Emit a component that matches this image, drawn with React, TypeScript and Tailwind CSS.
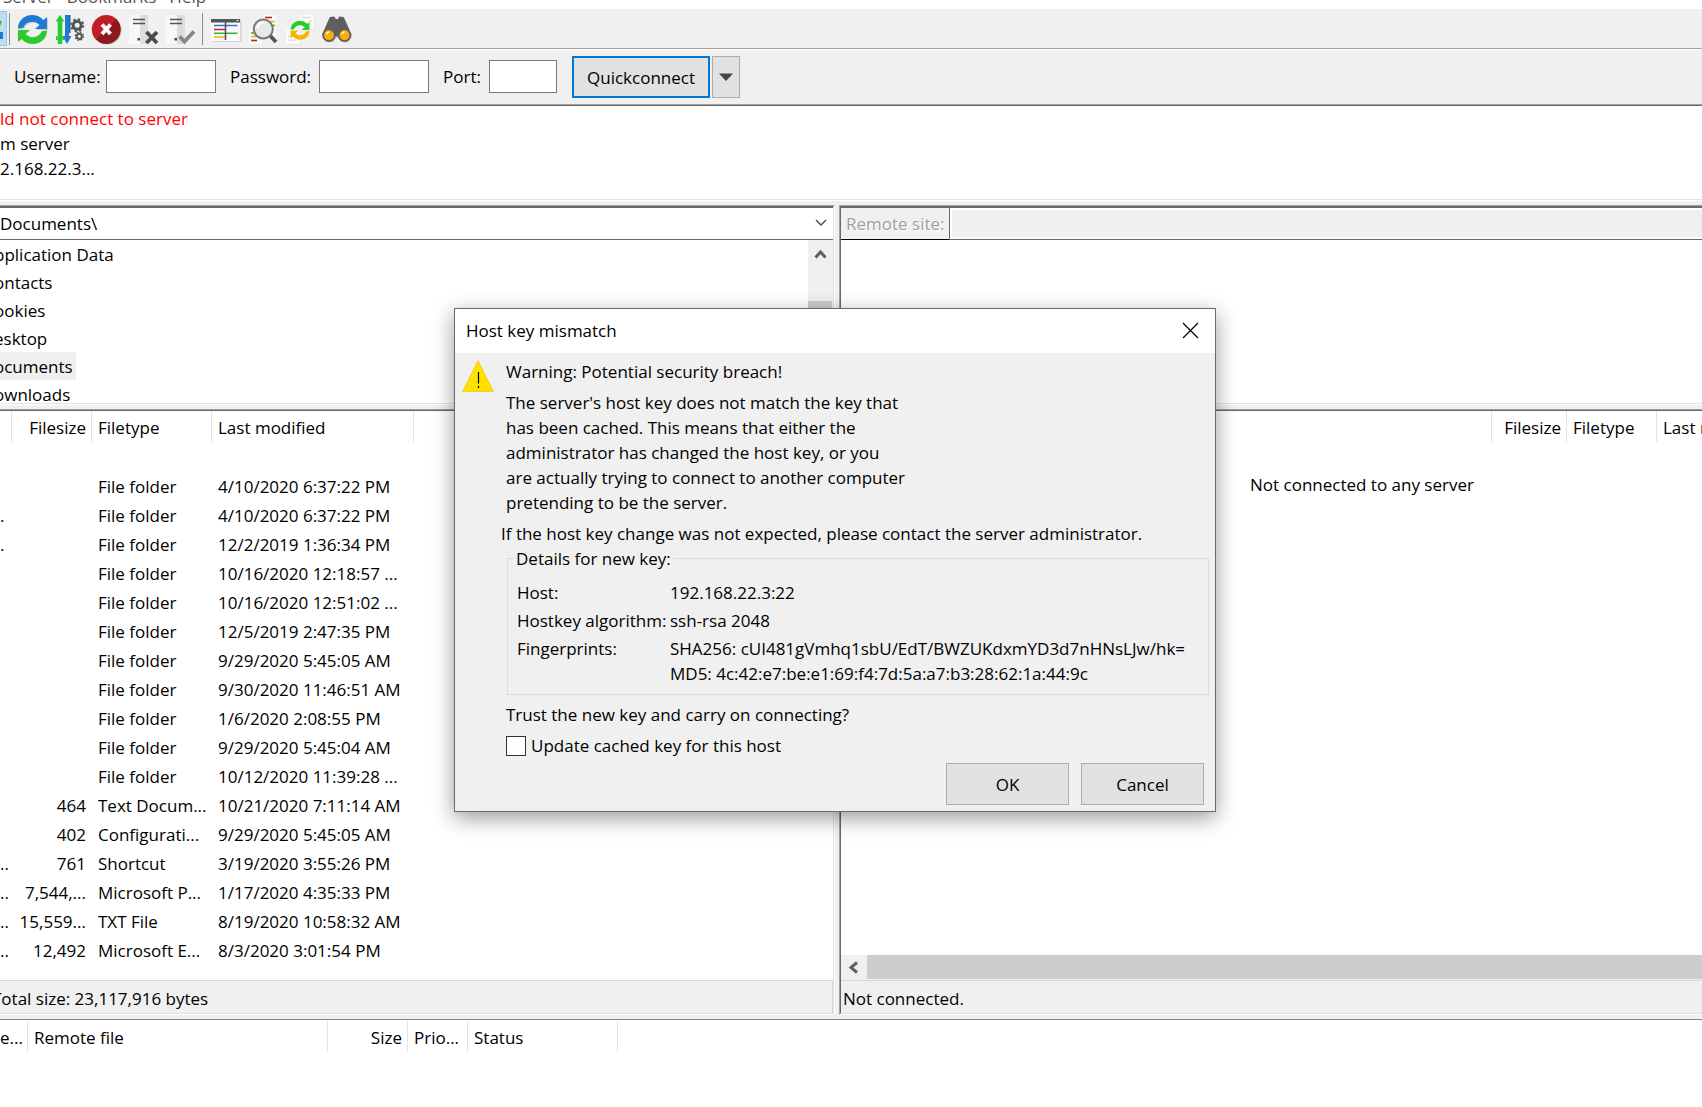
import { useState } from 'react';
import type { ReactNode } from 'react';

type FileRow = { name: string; size: string; type: string; modified: string };

const files: FileRow[] = [
  { name: '', size: '', type: '', modified: '' },
  { name: '', size: '', type: 'File folder', modified: '4/10/2020 6:37:22 PM' },
  { name: '.', size: '', type: 'File folder', modified: '4/10/2020 6:37:22 PM' },
  { name: '.', size: '', type: 'File folder', modified: '12/2/2019 1:36:34 PM' },
  { name: '', size: '', type: 'File folder', modified: '10/16/2020 12:18:57 ...' },
  { name: '', size: '', type: 'File folder', modified: '10/16/2020 12:51:02 ...' },
  { name: '', size: '', type: 'File folder', modified: '12/5/2019 2:47:35 PM' },
  { name: '', size: '', type: 'File folder', modified: '9/29/2020 5:45:05 AM' },
  { name: '', size: '', type: 'File folder', modified: '9/30/2020 11:46:51 AM' },
  { name: '', size: '', type: 'File folder', modified: '1/6/2020 2:08:55 PM' },
  { name: '', size: '', type: 'File folder', modified: '9/29/2020 5:45:04 AM' },
  { name: '', size: '', type: 'File folder', modified: '10/12/2020 11:39:28 ...' },
  { name: '', size: '464', type: 'Text Docum...', modified: '10/21/2020 7:11:14 AM' },
  { name: '', size: '402', type: 'Configurati...', modified: '9/29/2020 5:45:05 AM' },
  { name: '..', size: '761', type: 'Shortcut', modified: '3/19/2020 3:55:26 PM' },
  { name: '..', size: '7,544,...', type: 'Microsoft P...', modified: '1/17/2020 4:35:33 PM' },
  { name: '..', size: '15,559...', type: 'TXT File', modified: '8/19/2020 10:58:32 AM' },
  { name: '..', size: '12,492', type: 'Microsoft E...', modified: '8/3/2020 3:01:54 PM' },
];

const folders = ['pplication Data', 'ontacts', 'ookies', 'esktop', 'ocuments', 'ownloads'];

const cycle =
  'M1 15.500C1 7.500 7.500 2 15 2c4.500 0 8.500 1.800 11.300 5L30 4v12H18l4.500-4c-2-2-4.500-3.200-7.500-3.200-4 0-7 2.200-9 6.200L1 15.500z';

const gear = '2.350 2.350';

/* ---------- toolbar icons ---------- */

function RefreshIcon() {
  return (
    <svg viewBox="0 0 32 32" className="size-8">
      <path d={cycle} transform="translate(1 1)" fill="#cfcfcf" />
      <path d={cycle} fill="#1f7ad6" />
      <path d={cycle} transform="rotate(180 15.500 16.500)" fill="#2bcb2b" />
    </svg>
  );
}

function ProcessQueueIcon() {
  return (
    <svg viewBox="0 0 32 32" className="size-8">
      <path d="M6 2l4.500 6.500H8.300V31H3.700V8.500H1.500z" fill="#2bcb2b" />
      <path d="M2 23h1.700v4H2zM8.300 23h1.900v4H8.300z" fill="#2bcb2b" />
      <path d="M11 2h4v21h2.500L13 31l-4.500-8H11z" fill="#1f7ad6" />
      <path d="M15 2h1.500v18H15z" fill="#1a64b0" />
      <circle cx="23.200" cy="12.300" r="4" fill="none" stroke="#555" strokeWidth="3" />
      <circle cx="23.200" cy="12.300" r="6" fill="none" stroke="#555" strokeWidth="2" strokeDasharray={gear} />
      <circle cx="25.300" cy="23.300" r="2.600" fill="none" stroke="#555" strokeWidth="2" />
      <circle cx="25.300" cy="23.300" r="4" fill="none" stroke="#555" strokeWidth="1.600" strokeDasharray="1.570 1.570" />
    </svg>
  );
}

function CancelIcon() {
  return (
    <svg viewBox="0 0 32 32" className="size-8">
      <defs>
        <linearGradient id="stop" x1="0" y1="0" x2="1" y2="1">
          <stop offset="0.500" stopColor="#c11f27" />
          <stop offset="0.500" stopColor="#8f181d" />
        </linearGradient>
      </defs>
      <circle cx="16.300" cy="17.300" r="14.500" fill="#d3d3d3" />
      <circle cx="15.300" cy="16.500" r="14.500" fill="url(#stop)" />
      <path d="M11 11.500l8.500 9.500M19.500 11.500L11 21" stroke="#fff" strokeWidth="3.800" />
    </svg>
  );
}

function ServerIcon({ children }: { children: ReactNode }) {
  return (
    <svg viewBox="0 0 32 32" className="size-8">
      <path d="M1 2h11v29H1z" fill="#f8f8f8" />
      <path d="M12 2h8v29h-8z" fill="#dcdcdc" />
      <path d="M5 6.500h12M5 10.500h12" stroke="#555" strokeWidth="1.600" />
      <path d="M9.500 25h2.500v2.500H9.500z" fill="#444" />
      {children}
    </svg>
  );
}

function ListIcon() {
  return (
    <svg viewBox="0 0 32 32" className="size-8">
      <path d="M1 7h29.500v22H1z" fill="#d5d5d5" />
      <path d="M0 6h29v22H0z" fill="#fbfbfb" />
      <path d="M0 6h29v3.500H0z" fill="#555" />
      <path d="M25.500 7.500h2" stroke="#fff" />
      <path d="M3 12.500h23.500" stroke="#1f7ad6" strokeWidth="1.500" />
      <path d="M3 16.500h11" stroke="#c11f27" strokeWidth="1.500" />
      <path d="M3 20.300h23.500" stroke="#2bb52b" strokeWidth="1.500" />
      <path d="M3 24h11" stroke="#f5b400" strokeWidth="1.500" />
      <path d="M14.500 9v18" stroke="#555" strokeWidth="1.600" />
    </svg>
  );
}

function FilterIcon() {
  return (
    <svg viewBox="0 0 32 32" className="size-8">
      <path d="M15 2h13v21H15zM1 16h13v15H1z" fill="#fafafa" />
      <path d="M17 4.500h7" stroke="#c11f27" strokeWidth="1.600" />
      <path d="M22 8.500h5" stroke="#f5b400" strokeWidth="1.600" />
      <path d="M24 12.500h3M3 20h5" stroke="#2bb52b" strokeWidth="1.600" />
      <path d="M3 23.500h6" stroke="#f5b400" strokeWidth="1.600" />
      <path d="M3 27.500h6" stroke="#c11f27" strokeWidth="1.600" />
      <path d="M21.500 22l6.500 7" stroke="#555" strokeWidth="3.800" />
      <circle cx="15.300" cy="16" r="9.500" fill="#e9e9e9" stroke="#777" strokeWidth="2" />
      <path d="M9.500 15a6 6 0 0 1 6-5.500" fill="none" stroke="#fff" strokeWidth="2" />
    </svg>
  );
}

function CompareIcon() {
  return (
    <svg viewBox="0 0 32 32" className="size-8">
      <path d="M15 3h15v14H15zM1 18h15v14H1z" fill="#e4e4e4" />
      <path d="M15 2h14v14H15zM1 17h14v14H1z" fill="#fbfbfb" />
      <path d="M17 4.500h9M24 8h3M3 23.500h4M3 27h8" stroke="#dedede" strokeWidth="1.400" />
      <g transform="translate(5 6.500) scale(0.650)">
        <path d={cycle} fill="#2bcb2b" />
        <path d={cycle} transform="rotate(180 15.500 16.500)" fill="#f5b400" />
      </g>
    </svg>
  );
}

function FindIcon() {
  return (
    <svg viewBox="0 0 32 32" className="size-8">
      <path d="M9 5l4.500-.500L14.500 7H17l1-2.500L22.500 5l2 4 6 14-4 6.500-7-.500-3-4h-2l-3 4-6 .500L1 23 7 9z" fill="#d0d0d0" />
      <path d="M8 4l4.500-.500L13.500 6H16l1-2.500L21.500 4l2 4 6 14-13 1.500h-3.500L0 22 6 8z" fill="#5f5f5f" />
      <circle cx="7" cy="22.300" r="6.700" fill="#5f5f5f" />
      <circle cx="22.500" cy="22.300" r="6.700" fill="#5f5f5f" />
      <circle cx="7" cy="22.300" r="5" fill="#f9b000" />
      <circle cx="22.500" cy="22.300" r="5" fill="#f9b000" />
      <path d="M4.500 21a3 3 0 0 1 2.500-2M20 21a3 3 0 0 1 2.500-2" fill="none" stroke="#fff" strokeWidth="1.500" />
    </svg>
  );
}

function ToolButton({ label, children }: { label: string; children: ReactNode }) {
  return (
    <button type="button" aria-label={label} className="size-8 shrink-0">
      {children}
    </button>
  );
}

/* ---------- frames ---------- */

const sides = {
  none: { outer: '', inner: '' },
  local: { outer: 'border-r border-r-white', inner: 'border-r border-r-[#e3e3e3]' },
  remote: { outer: 'border-l border-l-[#a0a0a0]', inner: 'border-l border-l-[#696969]' },
};

// Sunken 3D edge, two lines on each side
function Sunken({ side = 'none', className, children }: { side?: keyof typeof sides; className: string; children: ReactNode }) {
  const { outer, inner } = sides[side];
  return (
    <div className={`flex min-w-0 flex-col border-t border-b border-t-[#a0a0a0] border-b-white ${outer} ${className}`}>
      <div className={`flex min-h-0 grow flex-col overflow-hidden border-t border-b border-t-[#696969] border-b-[#e3e3e3] bg-white ${inner}`}>
        {children}
      </div>
    </div>
  );
}

const th = 'h-[31px] border-r border-[#e3e3e3] pt-[2px] pr-[5px] pb-0 pl-[6px] font-normal whitespace-nowrap overflow-hidden';

function LocalPane() {
  return (
    <div className="flex w-[835px] shrink-0 flex-col gap-1">
      <Sunken side="local" className="h-[200px] shrink-0">
        <div className="relative shrink-0">
          <select aria-label="Local site" className="block h-[33px] w-full appearance-none border-y border-[#696969] bg-white">
            <option>Documents\</option>
          </select>
          <svg viewBox="0 0 12 8" className="pointer-events-none absolute top-3 right-[6px] h-2 w-3">
            <path d="M1 1l5 5 5-5" fill="none" stroke="#444" strokeWidth="1.300" />
          </svg>
        </div>
        <div className="flex min-h-0 grow">
          <ul className="-ml-[6px] grow overflow-hidden">
            {folders.map((f) => (
              <li key={f} className="flex h-7 items-center">
                <span className={f === 'ocuments' ? 'flex h-7 items-center bg-[#f0f0f0] pr-[3px]' : ''}>{f}</span>
              </li>
            ))}
          </ul>
          <div className="flex w-[25px] shrink-0 flex-col bg-[#f0f0f0] pr-px">
            <svg viewBox="0 0 24 24" className="mt-[3px] mb-[34px] size-6 shrink-0">
              <path d="M7.500 14.500L12.500 9l5 5.500" fill="none" stroke="#606060" strokeWidth="3" />
            </svg>
            <div className="grow bg-[#cdcdcd]" />
          </div>
        </div>
      </Sunken>

      <Sunken side="local" className="min-h-0 grow">
        <div className="min-h-0 grow overflow-hidden">
          <table className="w-[414px] table-fixed border-separate border-spacing-0">
            <colgroup>
              <col className="w-[12px]" />
              <col className="w-[80px]" />
              <col className="w-[120px]" />
              <col className="w-[202px]" />
            </colgroup>
            <thead>
              <tr>
                <th className={th} />
                <th className={`${th} text-right`}>Filesize</th>
                <th className={`${th} text-left`}>Filetype</th>
                <th className={`${th} text-left`}>Last modified</th>
              </tr>
            </thead>
            <tbody>
              {files.map((f, i) => (
                <tr key={i} className="h-[29px] whitespace-nowrap">
                  <td className="p-0 pt-[2px]">{f.name}</td>
                  <td className="p-0 pt-[2px] pr-[6px] text-right">{f.size}</td>
                  <td className="p-0 pt-[2px] pl-[6px]">{f.type}</td>
                  <td className="p-0 pt-[2px] pl-[6px]">{f.modified}</td>
                </tr>
              ))}
            </tbody>
          </table>
        </div>
        <div className="flex h-[33px] shrink-0 items-center border-t border-r border-[#d7d7d7] bg-[#f0f0f0] pt-[2px]">
          <span className="-ml-2">Total size: 23,117,916 bytes</span>
        </div>
      </Sunken>
    </div>
  );
}

function RemotePane() {
  return (
    <div className="flex min-w-0 grow flex-col gap-1">
      <Sunken side="remote" className="h-[200px] shrink-0">
        <div className="flex h-[33px] shrink-0 border-t border-[#696969]">
          <label
            htmlFor="remote-site"
            className="flex w-[108px] shrink-0 items-center border-b border-black bg-[#f0f0f0] pl-[5px] text-[#a0a0a0] [text-shadow:1px_1px_#fff]"
          >
            Remote site:
          </label>
          <div className="grow border-b border-l border-[#696969] p-[2px] pr-0">
            <select id="remote-site" disabled className="block h-full w-full appearance-none bg-[#f0f0f0]" />
          </div>
        </div>
      </Sunken>

      <Sunken side="remote" className="min-h-0 grow">
        <div className="min-h-0 grow overflow-hidden">
          <table className="w-[1042px] table-fixed border-separate border-spacing-0">
            <colgroup>
              <col className="w-[651px]" />
              <col className="w-[75px]" />
              <col className="w-[90px]" />
              <col className="w-[226px]" />
            </colgroup>
            <thead>
              <tr>
                <th className={th} />
                <th className={`${th} text-right`}>Filesize</th>
                <th className={`${th} text-left`}>Filetype</th>
                <th className={`${th} text-left`}>Last modified</th>
              </tr>
            </thead>
            <tbody>
              <tr>
                <td colSpan={4} className="px-0 pt-[30px] text-center">
                  Not connected to any server
                </td>
              </tr>
            </tbody>
          </table>
        </div>
        <div className="flex h-[25px] shrink-0 bg-[#f0f0f0] pb-px">
          <svg viewBox="0 0 26 24" className="h-6 w-[26px] shrink-0">
            <path d="M16 7.500l-6 5 6 5" fill="none" stroke="#606060" strokeWidth="3" />
          </svg>
          <div className="grow bg-[#cdcdcd]" />
        </div>
        <div className="flex h-[33px] shrink-0 items-center border-t border-[#d7d7d7] bg-[#f0f0f0] px-[2px] pt-[2px]">Not connected.</div>
      </Sunken>
    </div>
  );
}

function HostKeyDialog() {
  const [update, setUpdate] = useState(false);

  return (
    <div
      role="dialog"
      aria-labelledby="dialog-title"
      className="absolute top-[308px] left-[454px] w-[762px] border border-[#696969] bg-[#f0f0f0] shadow-[0_6px_20px_rgba(0,0,0,0.4)]"
    >
      <div className="flex h-11 items-center justify-between bg-white pr-4 pb-[2px] pl-[11px]">
        <h2 id="dialog-title">Host key mismatch</h2>
        <button type="button" aria-label="Close">
          <svg viewBox="0 0 17 17" className="size-[17px]">
            <path d="M1 1l15 15M16 1L1 16" stroke="#000" strokeWidth="1.200" />
          </svg>
        </button>
      </div>

      <div className="flex gap-[7px] pt-[6px] pr-[6px] pb-[6px] pl-[7px]">
        <svg viewBox="0 0 32 32" className="mt-px size-8 shrink-0">
          <path d="M16 .5L31.500 31.500H.5z" fill="#ffe100" stroke="#fbc02d" strokeWidth="0.800" />
          <path d="M16.500 12v11.500M16.500 26v2" stroke="#000" strokeWidth="1.200" />
        </svg>

        <div className="grow whitespace-nowrap">
          <p className="pl-[5px]">Warning: Potential security breach!</p>
          <p className="mt-[6px] pl-[5px]">
            The server's host key does not match the key that
            <br />
            has been cached. This means that either the
            <br />
            administrator has changed the host key, or you
            <br />
            are actually trying to connect to another computer
            <br />
            pretending to be the server.
          </p>
          <p className="mt-[6px]">If the host key change was not expected, please contact the server administrator.</p>

          <fieldset className="ml-[6px] border border-[#dcdcdc] pb-2">
            <legend className="ml-[6px] px-[2px]">Details for new key:</legend>
            <dl className="grid grid-cols-[153px_1fr] gap-y-[3px] pt-[9px] pl-[9px]">
              <dt>Host:</dt>
              <dd>192.168.22.3:22</dd>
              <dt>Hostkey algorithm:</dt>
              <dd>ssh-rsa 2048</dd>
              <dt>Fingerprints:</dt>
              <dd>
                SHA256: cUI481gVmhq1sbU/EdT/BWZUKdxmYD3d7nHNsLJw/hk=
                <br />
                MD5: 4c:42:e7:be:e1:69:f4:7d:5a:a7:b3:28:62:1a:44:9c
              </dd>
            </dl>
          </fieldset>

          <p className="mt-[7px] pl-[5px]">Trust the new key and carry on connecting?</p>
          <label className="mt-[6px] flex items-center gap-[5px] pl-[5px]">
            <input
              type="checkbox"
              checked={update}
              onChange={(e) => setUpdate(e.target.checked)}
              className="size-5 appearance-none border border-[#333] bg-white checked:bg-[#0078d7]"
            />
            Update cached key for this host
          </label>

          <div className="mt-[5px] flex justify-end gap-3 pr-[5px]">
            <button type="button" className="h-[42px] w-[123px] border border-[#adadad] bg-[#e1e1e1]">
              OK
            </button>
            <button type="button" className="h-[42px] w-[123px] border border-[#adadad] bg-[#e1e1e1]">
              Cancel
            </button>
          </div>
        </div>
      </div>
    </div>
  );
}

const field = 'mt-1 h-[33px] border border-[#7a7a7a] bg-white px-1';

export default function App() {
  return (
    <div className="relative flex h-screen flex-col overflow-hidden bg-[#f0f0f0] font-['Open_Sans','Noto_Sans',sans-serif] text-[17px] leading-[25px] text-black">
      <nav className="flex h-[9px] shrink-0 items-end gap-[13px] overflow-hidden bg-white pl-[3px] text-[#555]">
        <span>Server</span>
        <span>Bookmarks</span>
        <span>Help</span>
      </nav>

      {/* toolbar */}
      <div className="flex h-[41px] shrink-0 items-center border-b border-white bg-[#f0f0f0]">
        <div className="flex h-full grow items-center border-b border-[#a0a0a0]">
          <button type="button" aria-label="Toggle transfer queue" className="h-[35px] w-[7px] border-y border-r border-[#90c8f6] bg-[#c0dcf3]">
            <svg viewBox="0 0 6 33" className="h-[33px] w-[6px]">
              <path d="M0 8l2 2-2 4z" fill="#2bcb2b" />
              <path d="M0 20h3v7H0z" fill="#1f7ad6" />
            </svg>
          </button>
          <div className="mr-[7px] ml-[2px] h-8 w-px bg-[#8c8c8c]" />
          <div className="flex gap-[5px]">
            <ToolButton label="Refresh">
              <RefreshIcon />
            </ToolButton>
            <ToolButton label="Process queue">
              <ProcessQueueIcon />
            </ToolButton>
            <ToolButton label="Cancel">
              <CancelIcon />
            </ToolButton>
            <ToolButton label="Disconnect">
              <ServerIcon>
                <path d="M18.500 19l10.500 11M29 19L18.500 30" stroke="#4a4a4a" strokeWidth="3.800" />
              </ServerIcon>
            </ToolButton>
            <ToolButton label="Reconnect">
              <ServerIcon>
                <path d="M14.500 23.500l5 5 9.500-10" fill="none" stroke="#858585" strokeWidth="3.800" />
              </ServerIcon>
            </ToolButton>
          </div>
          <div className="mr-2 ml-[5px] h-8 w-px bg-[#8c8c8c]" />
          <div className="flex gap-[5px]">
            <ToolButton label="Directory listing">
              <ListIcon />
            </ToolButton>
            <ToolButton label="Filters">
              <FilterIcon />
            </ToolButton>
            <ToolButton label="Directory comparison">
              <CompareIcon />
            </ToolButton>
            <ToolButton label="Find files">
              <FindIcon />
            </ToolButton>
          </div>
        </div>
      </div>

      {/* quickconnect bar */}
      <form className="flex h-[54px] shrink-0 items-start pt-[6px] pl-[14px] leading-[42px]" onSubmit={(e) => e.preventDefault()}>
        <label htmlFor="username" className="w-[92px]">Username:</label>
        <input id="username" type="text" className={`${field} mr-[14px] w-[110px]`} />
        <label htmlFor="password" className="w-[89px]">Password:</label>
        <input id="password" type="password" className={`${field} mr-[14px] w-[110px]`} />
        <label htmlFor="port" className="w-[46px]">Port:</label>
        <input id="port" type="text" className={`${field} mr-[15px] w-[68px]`} />
        <button type="submit" className="h-[42px] w-[138px] border-2 border-[#0078d7] bg-[#e1e1e1] leading-[25px]">Quickconnect</button>
        <button type="button" aria-label="Recent servers" className="ml-[2px] grid h-[42px] w-7 place-items-center border border-[#adadad] bg-[#e1e1e1]">
          <svg viewBox="0 0 14 8" className="h-2 w-[14px]">
            <path d="M0 .5h14L7 8z" fill="#444" />
          </svg>
        </button>
      </form>

      {/* message log */}
      <Sunken className="h-[97px] shrink-0">
        <div className="whitespace-nowrap">
          <p className="text-[#ff0000]">ld not connect to server</p>
          <p>m server</p>
          <p>2.168.22.3...</p>
        </div>
      </Sunken>

      <main className="mt-1 flex min-h-0 grow gap-1">
        <LocalPane />
        <RemotePane />
      </main>

      {/* transfer queue */}
      <div className="mt-1 h-[88px] shrink-0 border-t border-[#828790] bg-white pt-px">
        <table className="w-[618px] table-fixed border-separate border-spacing-0">
          <colgroup>
            <col className="w-[28px]" />
            <col className="w-[300px]" />
            <col className="w-[80px]" />
            <col className="w-[60px]" />
            <col className="w-[150px]" />
          </colgroup>
          <thead>
            <tr>
              <th className="h-[31px] border-r border-[#e3e3e3] p-0 pt-[2px] text-left font-normal">e...</th>
              <th className={`${th} text-left`}>Remote file</th>
              <th className={`${th} text-right`}>Size</th>
              <th className={`${th} text-left`}>Prio...</th>
              <th className={`${th} text-left`}>Status</th>
            </tr>
          </thead>
        </table>
      </div>

      <HostKeyDialog />
    </div>
  );
}
